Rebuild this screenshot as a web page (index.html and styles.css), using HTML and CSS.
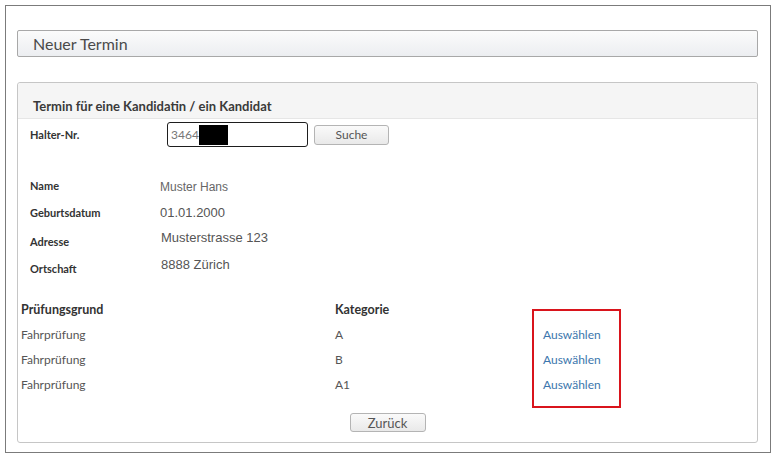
FILE: index.html
```html
<!DOCTYPE html>
<html lang="de">
<head>
<meta charset="utf-8">
<title>Neuer Termin</title>
<link rel="stylesheet" href="styles.css">
</head>
<body>
<div class="frame">
  <div class="titlebar">Neuer Termin</div>
  <div class="panel">
    <div class="panel-head">Termin für eine Kandidatin / ein Kandidat</div>
    <div class="search-row">
      <span class="lbl lbl-halter">Halter-Nr.</span>
      <div class="input"><span class="input-text">3464</span><span class="redact"></span></div>
      <button class="btn btn-suche">Suche</button>
    </div>
    <div class="person">
      <span class="lbl">Name</span><span class="val val-name">Muster Hans</span>
      <span class="lbl">Geburtsdatum</span><span class="val">01.01.2000</span>
      <span class="lbl lbl-low">Adresse</span><span class="val val-up">Musterstrasse 123</span>
      <span class="lbl lbl-low">Ortschaft</span><span class="val val-up">8888 Zürich</span>
    </div>
    <div class="table">
      <div class="th">Prüfungsgrund</div><div class="th">Kategorie</div><div class="th"></div>
      <div class="td">Fahrprüfung</div><div class="td">A</div><div class="td"><a class="link">Auswählen</a></div>
      <div class="td">Fahrprüfung</div><div class="td">B</div><div class="td"><a class="link">Auswählen</a></div>
      <div class="td">Fahrprüfung</div><div class="td">A1</div><div class="td"><a class="link">Auswählen</a></div>
    </div>
    <div class="footer"><button class="btn btn-back">Zurück</button></div>
    <div class="highlight"></div>
  </div>
</div>
</body>
</html>
```
FILE: styles.css
```css
* { box-sizing: border-box; }
html, body { margin: 0; padding: 0; background: #fff; }
body { font-family: Lato, "Open Sans", sans-serif; color: #333; }

.frame {
  margin: 5px 0 0 5px;
  width: 766px;
  height: 448px;
  border: 1px solid #7b7b7b;
  padding: 24px 12px 0 11px;
}

.titlebar {
  height: 27px;
  border: 1px solid #a8a8a8;
  border-radius: 2px;
  background: linear-gradient(#fbfbfb, #eceef1);
  font-size: 16px;
  line-height: 25px;
  color: #4a4a4a;
  padding-left: 15px;
}

.panel {
  position: relative;
  margin-top: 25px;
  height: 361px;
  border: 1px solid #c6c6c6;
  border-radius: 3px;
  background: #fff;
}

.panel-head {
  height: 36px;
  background: #f5f5f5;
  border-bottom: 1px solid #e6e6e6;
  border-radius: 3px 3px 0 0;
  padding: 14px 0 0 15px;
  font-size: 13px;
  font-weight: 700;
  line-height: 18px;
  color: #3a3a3a;
}

.search-row {
  display: flex;
  align-items: center;
  height: 25px;
  margin-top: 3px;
  padding-left: 12px;
}
.lbl {
  font-size: 11px;
  font-weight: 700;
  color: #333;
}
.lbl-halter { width: 137px; }

.input {
  width: 141px;
  height: 25px;
  border: 1px solid #1e1e1e;
  border-radius: 3px;
  display: flex;
  align-items: center;
  padding-left: 3px;
}
.input-text { font-size: 12px; color: #777; }
.redact {
  display: inline-block;
  width: 29px;
  height: 20px;
  background: #000;
  margin-top: 1px;
}

.btn {
  font-family: Lato, "Open Sans", sans-serif;
  font-size: 12px;
  color: #555;
  background: linear-gradient(#fafafa, #e9e9e9);
  border: 1px solid #b4b4b4;
  border-radius: 3px;
  padding: 0;
  line-height: 17px;
}
.btn-suche {
  width: 75px;
  height: 20px;
  margin-left: 6px;
}

.person {
  display: grid;
  grid-template-columns: 130px auto;
  grid-auto-rows: 27px;
  align-items: center;
  margin-top: 25px;
  padding-left: 12px;
}
.val {
  font-family: "Liberation Sans", Arial, sans-serif;
  font-size: 13px;
  color: #555;
}
.val-name { font-size: 12px; color: #666; margin-top: 3px; }
.val-up { margin-top: -5px; margin-left: 1px; }
.lbl-low { margin-top: 3px; }

.table {
  display: grid;
  grid-template-columns: 314px 208px 100px;
  grid-template-rows: 26px 25px 25px 25px;
  align-items: center;
  margin-top: 16px;
  padding-left: 3px;
}
.th { font-size: 12.5px; font-weight: 700; color: #333; }
.td { font-size: 12px; color: #555; }
.link { color: #3b76ad; text-decoration: none; }

.footer {
  display: flex;
  justify-content: center;
  margin-top: 16px;
}
.btn-back {
  width: 76px;
  height: 19px;
  font-size: 13px;
  line-height: 16px;
}

.highlight {
  position: absolute;
  left: 514px;
  top: 226px;
  width: 89px;
  height: 99px;
  border: 2px solid #d9141c;
}
```
